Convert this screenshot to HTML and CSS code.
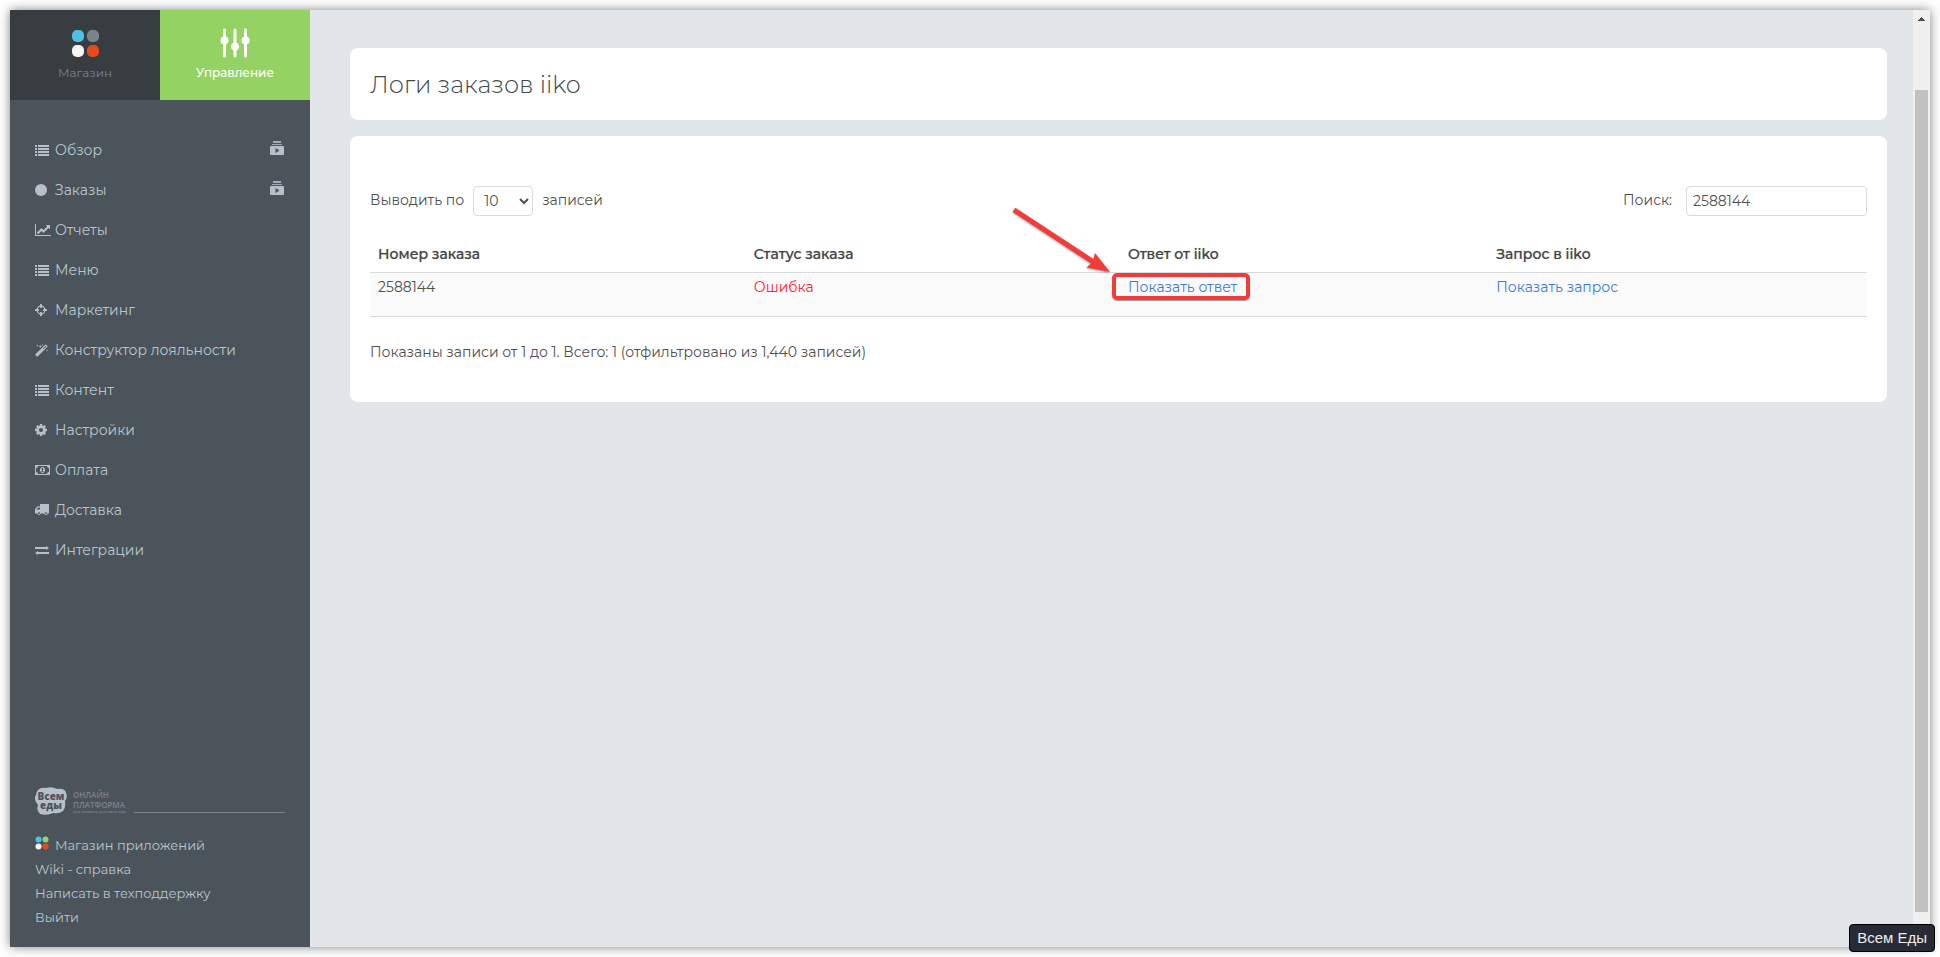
FILE: index.html
```html
<!DOCTYPE html>
<html lang="ru">
<head>
<meta charset="utf-8">
<meta name="viewport" content="width=device-width, initial-scale=1">
<title>Логи заказов iiko</title>
<link rel="stylesheet" href="styles.css">
</head>
<body>
<svg class="sprite" aria-hidden="true">
  <symbol id="i-list" viewBox="0 0 14 11"><path d="M0 0h2v2H0zM3 0h11v2H3zM0 3h2v2H0zM3 3h11v2H3zM0 6h2v2H0zM3 6h11v2H3zM0 9h2v2H0zM3 9h11v2H3z"/></symbol>
  <symbol id="i-circle" viewBox="0 0 12 12"><circle cx="6" cy="6" r="6"/></symbol>
  <symbol id="i-chart" viewBox="0 0 2048 1536"><path d="M2048 1408v128H0V0h128v1408h1920zm-128-1248v435q0 21-19.500 29.500t-35.500-7.500l-121-121-633 633q-10 10-23 10t-23-10l-233-233-416 416-192-192 585-585q10-10 23-10t23 10l233 233 464-464-121-121q-16-16-7.500-35.500t29.500-19.500h435q14 0 23 9t9 23z"/></symbol>
  <symbol id="i-target" viewBox="128 128 1536 1536"><path d="M1325 1024h-109q-26 0-45-19t-19-45v-128q0-26 19-45t45-19h109q-32-108-112.500-188.500t-188.500-112.500v109q0 26-19 45t-45 19h-128q-26 0-45-19t-19-45v-109q-108 32-188.500 112.500t-112.500 188.500h109q26 0 45 19t19 45v128q0 26-19 45t-45 19h-109q32 108 112.500 188.500t188.500 112.500v-109q0-26 19-45t45-19h128q26 0 45 19t19 45v109q108-32 188.500-112.500t112.500-188.500zm339-192v128q0 26-19 45t-45 19h-143q-37 161-154.500 278.500t-278.500 154.500v143q0 26-19 45t-45 19h-128q-26 0-45-19t-19-45v-143q-161-37-278.500-154.500t-154.500-278.500h-143q-26 0-45-19t-19-45v-128q0-26 19-45t45-19h143q37-161 154.500-278.500t278.500-154.500v-143q0-26 19-45t45-19h128q26 0 45 19t19 45v143q161 37 278.500 154.500t154.500 278.500h143q26 0 45 19t19 45z"/></symbol>
  <symbol id="i-magic" viewBox="0 0 13 13"><path fill-rule="evenodd" d="M10.300.7q.4-.4.800 0l1.300 1.300q.4.400 0 .8L2.700 12.600q-.4.400-.8 0L.4 11.100q-.4-.4 0-.8zM10.700 1.900 8.200 4.400l.6.600 2.500-2.500z"/><path d="M2.300.2l.3.900.9.300-.9.300-.3.900-.3-.9-.9-.3.900-.3zM5.200.5l.5 1.300 1.300.5-1.300.5-.5 1.300-.5-1.300-1.300-.5 1.300-.5zM12 5.300l.3.900.7.300-.7.300-.3.900-.3-.9-.8-.3.800-.3zM7.600 0l.3.700.8.300-.8.300-.3.700-.3-.7-.8-.3.800-.3z"/></symbol>
  <symbol id="i-cog" viewBox="128 128 1536 1536"><path d="M1152 896q0-106-75-181t-181-75-181 75-75 181 75 181 181 75 181-75 75-181zm512-109v222q0 12-8 23t-20 13l-185 28q-19 54-39 91 35 50 107 138 10 12 10 25t-9 23q-27 37-99 108t-94 71q-12 0-26-9l-138-108q-44 23-91 38-16 136-29 186-7 28-36 28h-222q-14 0-24.500-8.500t-11.500-21.500l-28-184q-49-16-90-37l-141 107q-10 9-25 9-14 0-25-11-126-114-165-168-7-10-7-23 0-12 8-23 15-21 51-66.500t54-70.500q-27-50-41-99l-183-27q-13-2-21-12.500t-8-23.500v-222q0-12 8-23t19-13l186-28q14-46 39-92-40-57-107-138-10-12-10-24 0-10 9-23 26-36 98.500-107.500t94.500-71.500q13 0 26 10l138 107q44-23 91-38 16-136 29-186 7-28 36-28h222q14 0 24.500 8.500t11.500 21.500l28 184q49 16 90 37l142-107q9-9 24-9 13 0 25 10 129 119 165 170 7 8 7 22 0 12-8 23-15 21-51 66.500t-54 70.500q26 50 41 98l183 28q13 2 21 12.500t8 23.500z"/></symbol>
  <symbol id="i-money" viewBox="0 0 15 10"><path fill-rule="evenodd" d="M.5 0h14q.5 0 .5.500v9q0 .5-.5.500H.5Q0 10 0 9.500v-9Q0 0 .500 0zM3 1Q3 3 1 3v4q2 0 2 2h9q0-2 2-2V3q-2 0-2-2zM7.500 2C9 2 10 3.400 10 5s-1 3-2.500 3S5 6.600 5 5s1-3 2.500-3zM7 3 6.100 3.800l.4.500.5-.3v2h-.8v.8h2.600V6H8V3z"/></symbol>
  <symbol id="i-truck" viewBox="0 0 14 12"><path fill-rule="evenodd" d="M5.500 0H13.500q.5 0 .5.500V9q0 .5-.8.500h-.4a1.900 1.900 0 0 1-3.700 0H5.900a1.900 1.900 0 0 1-3.700 0H.7Q0 9.500 0 9V5.800Q0 5 .5 4.500L2.300 2.600Q2.700 2.200 3.300 2.200H5V.5Q5 0 5.500 0zM1.200 5.500H5v-2H3.300zM4.050 8.200a.9.900 0 1 0 .01 0zM10.950 8.200a.9.900 0 1 0 .01 0z"/></symbol>
  <symbol id="i-exchange" viewBox="0 0 14 9"><path d="M0 1h11V0l3 2-3 2V3H0zM14 6H3V5L0 7l3 2V8h11z"/></symbol>
  <symbol id="i-video" viewBox="0 0 14 14"><path d="M3 0h8v2H3zM2 3h10v1H2z" opacity=".8"/><path fill-rule="evenodd" d="M1 5h12q1 0 1 1v7q0 1-1 1H1q-1 0-1-1V6q0-1 1-1zM5.500 7v5l4-2.500z"/></symbol>
</svg>

<div class="window">
  <aside class="sidebar">
    <div class="tabs">
      <a class="tab" href="#">
        <svg class="tab-icon" viewBox="0 0 27 27"><rect width="12" height="12" rx="5" fill="#4fbfe5"/><rect x="15" width="12" height="12" rx="5" fill="#7b838b"/><rect y="15" width="12" height="12" rx="5" fill="#f5f5f5"/><rect x="15" y="15" width="12" height="12" rx="5" fill="#e8491f"/></svg>
        <span>Магазин</span>
      </a>
      <a class="tab tab-active" href="#">
        <svg class="tab-icon tab-icon-wide" viewBox="0 0 30 30"><path d="M4.500 2v26M15 2v26M25.500 2v26" stroke="#fff" stroke-width="3" stroke-linecap="round"/><g fill="#fff"><circle cx="4.500" cy="12.500" r="4"/><circle cx="15" cy="18.500" r="4"/><circle cx="25.500" cy="12.500" r="4"/></g></svg>
        <span>Управление</span>
      </a>
    </div>

    <nav class="menu">
      <a href="#"><svg class="ic" width="14" height="11"><use href="#i-list"/></svg><span>Обзор</span><svg class="video" width="14" height="14"><use href="#i-video"/></svg></a>
      <a href="#"><svg class="ic" width="12" height="12"><use href="#i-circle"/></svg><span>Заказы</span><svg class="video" width="14" height="14"><use href="#i-video"/></svg></a>
      <a href="#"><svg class="ic" width="16" height="12"><use href="#i-chart"/></svg><span>Отчеты</span></a>
      <a href="#"><svg class="ic" width="14" height="11"><use href="#i-list"/></svg><span>Меню</span></a>
      <a href="#"><svg class="ic" width="12" height="12"><use href="#i-target"/></svg><span>Маркетинг</span></a>
      <a href="#"><svg class="ic" width="13" height="13"><use href="#i-magic"/></svg><span>Конструктор лояльности</span></a>
      <a href="#"><svg class="ic" width="14" height="11"><use href="#i-list"/></svg><span>Контент</span></a>
      <a href="#"><svg class="ic" width="12" height="12"><use href="#i-cog"/></svg><span>Настройки</span></a>
      <a href="#"><svg class="ic" width="15" height="10"><use href="#i-money"/></svg><span>Оплата</span></a>
      <a href="#"><svg class="ic" width="14" height="12"><use href="#i-truck"/></svg><span>Доставка</span></a>
      <a href="#"><svg class="ic" width="14" height="9"><use href="#i-exchange"/></svg><span>Интеграции</span></a>
    </nav>

    <footer class="side-foot">
      <div class="brand">
        <svg class="brand-logo" viewBox="0 0 32 28"><path d="M3 3Q6 0 11 1Q17-1 22 2Q30 1 31 6Q33 10 30 14Q31 21 28 24Q24 27 18 26Q12 29 5 27Q1 23 3 18Q-2 12 1 8Q1 5 3 3z" fill="#b7c0c9"/><text x="16" y="13" class="logo-text">Всем</text><text x="16" y="22" class="logo-text">еды</text></svg>
        <div class="brand-text"><span>ОНЛАЙН</span><span>ПЛАТФОРМА</span><small>для бизнеса доставки еды</small></div>
        <div class="brand-line"></div>
      </div>
      <a href="#"><svg class="dots" viewBox="0 0 14 14"><circle cx="3.500" cy="3.500" r="3" fill="#4fbfe5"/><circle cx="10.500" cy="3.500" r="3" fill="#93d363"/><circle cx="3.500" cy="10.500" r="3" fill="#f5f5f5"/><circle cx="10.500" cy="10.500" r="3" fill="#e8491f"/></svg>Магазин приложений</a>
      <a href="#">Wiki - справка</a>
      <a href="#">Написать в техподдержку</a>
      <a href="#">Выйти</a>
    </footer>
  </aside>

  <main class="content">
    <section class="card title-card"><h1>Логи заказов iiko</h1></section>
    <section class="card table-card">
      <div class="controls">
        <div class="control">
          <label for="len">Выводить по</label>
          <select id="len"><option>10</option><option>25</option><option>50</option></select>
          <span>записей</span>
        </div>
        <div class="control control-search">
          <label for="search">Поиск:</label>
          <input id="search" type="text" value="2588144">
        </div>
      </div>
      <table class="orders">
        <colgroup><col class="c-num"><col class="c-status"><col class="c-answer"><col></colgroup>
        <thead><tr><th>Номер заказа</th><th>Статус заказа</th><th>Ответ от iiko</th><th>Запрос в iiko</th></tr></thead>
        <tbody><tr>
          <td>2588144</td>
          <td class="error">Ошибка</td>
          <td><span class="marked"><a href="#">Показать ответ</a>
            <svg class="arrow" viewBox="0 0 100 66"><path d="M3.300.7 81.500 52 83 46 98 65 74.500 60.500 79 56.500.7 5z"/></svg></span></td>
          <td><a href="#">Показать запрос</a></td>
        </tr></tbody>
      </table>
      <p class="info">Показаны записи от 1 до 1. Всего: 1 (отфильтровано из 1,440 записей)</p>
    </section>
  </main>

  <div class="scrollbar">
    <svg class="scroll-up" viewBox="0 0 7 4"><path d="M3 0h1v1h1v1h1v1h1v1H0V3h1V2h1V1h1z"/></svg>
    <div class="thumb"></div>
  </div>
</div>
<div class="badge">Всем Еды</div>
</body>
</html>
```

FILE: styles.css
```css
* { box-sizing: border-box; }
body {
  margin: 0;
  padding: 10px;
  min-height: 100vh;
  display: flex;
  background: #fff;
  color: #4f4f4f;
  font: 14px/20px Montserrat, Inter, "Noto Sans", sans-serif;
}
a { color: #3a7bdc; text-decoration: none; }
.sprite { position: absolute; width: 0; height: 0; }

.window {
  flex: 1;
  display: flex;
  background: #e2e6e9;
  box-shadow: 0 0 10px rgba(0, 0, 0, .5);
}

/* Sidebar */
.sidebar {
  flex: none;
  width: 300px;
  display: flex;
  flex-direction: column;
  background: #4c545b;
}
.tabs { display: flex; height: 90px; }
.tab {
  flex: 1;
  display: flex;
  flex-direction: column;
  align-items: center;
  gap: 5px;
  padding-top: 18px;
  background: #383d41;
  color: #7b838b;
  font-size: 12px;
}
.tab-icon { width: 30px; height: 30px; padding: 2px 1px 1px 2px; }
.tab-icon-wide { padding: 0; }
.tab-active { background: #94d363; color: #fff; font-weight: 500; }

.menu { flex: 1; padding: 30px 25px; }
.menu a {
  height: 40px;
  display: grid;
  grid-template-columns: 20px 1fr 15px;
  align-items: center;
  color: #b7c7cd;
}
.ic { fill: #b7c0c9; }
.video { fill: #b7c0c9; margin-bottom: 4px; }

.side-foot { padding: 0 25px 18px; display: flex; flex-direction: column; }
.side-foot a { color: #b7c7cd; font-size: 13px; line-height: 24px; }
.brand { display: flex; margin-bottom: 18px; }
.brand-logo { width: 32px; height: 28px; }
.logo-text { font: 800 10px "Open Sans", sans-serif; fill: #4c545b; text-anchor: middle; }
.brand-text {
  display: flex;
  flex-direction: column;
  width: 53px;
  margin: 3px 8px 0 6px;
  color: #7b838b;
  font: 600 8px/10px "Open Sans", sans-serif;
  white-space: nowrap;
}
.brand-text small { font-size: 4px; line-height: 4px; }
.brand-line { flex: 1; height: 26px; border-bottom: 1px solid #7b838b; }
.dots { width: 14px; height: 14px; margin-right: 6px; }

/* Content */
.content {
  flex: 1;
  padding: 38px 26px 38px 40px;
  display: flex;
  flex-direction: column;
  gap: 16px;
}
.card { background: #fff; border-radius: 8px; padding: 20px; }
.title-card { padding: 21px 20px 19px; }
h1 {
  margin: 0;
  color: #41484e;
  font-size: 24px;
  font-weight: 300;
  line-height: 32px;
}
.table-card { padding: 50px 20px 40px; }
.controls { display: flex; justify-content: space-between; }
.control { display: flex; align-items: center; gap: 9px; }
.control label, .control span { padding-bottom: 2px; }
.control-search { gap: 14px; }
select, input {
  height: 30px;
  border: 1px solid #d9dbdc;
  border-radius: 4px;
  background: #fff;
  color: #4f4f4f;
  font: inherit;
}
select { width: 60px; padding: 0 0 0 6px; }
input { width: 181px; padding: 0 6px; }

.orders {
  width: 100%;
  margin-top: 20px;
  border-collapse: collapse;
  table-layout: fixed;
  border-bottom: 1px solid #d9dbdc;
}
.c-num { width: 25.1%; }
.c-status { width: 25%; }
.c-answer { width: 24.6%; }
.orders th {
  padding: 8px;
  text-align: left;
  font-weight: 500;
  color: #444;
  text-shadow: 0 0 1px rgba(68, 68, 68, .6);
}
.orders td {
  height: 44px;
  padding: 4px 8px;
  vertical-align: top;
  background: #fafafa;
  border-top: 1px solid #d9dbdc;
}
.orders .error { color: #ff2338; }
.info { margin: 25px 0 0; }

/* Callout around the answer link */
.marked { position: relative; }
.marked::before {
  content: "";
  position: absolute;
  inset: -5px -13px -4px -16px;
  border: 4px solid #f23b3b;
  border-radius: 5px;
  box-shadow: 0 1px 1px rgba(0, 0, 0, .4);
  pointer-events: none;
}
.arrow {
  position: absolute;
  right: 100%;
  bottom: 100%;
  width: 100px;
  height: 66px;
  margin: 0 16px 5px 0;
  fill: #f23b3b;
  filter: drop-shadow(0 1px 1px rgba(0, 0, 0, .4));
}

/* Scrollbar */
.scrollbar {
  flex: none;
  width: 17px;
  display: flex;
  flex-direction: column;
  align-items: center;
  padding: 7px 2px 35px;
  background: #f0f0f0;
}
.scroll-up { width: 7px; height: 4px; fill: #505050; }
.thumb { flex: 1; width: 13px; margin-top: 69px; background: #c1c1c1; }

.badge {
  position: fixed;
  right: 5px;
  bottom: 5px;
  padding: 3px 7px;
  border: 1px solid #000;
  border-radius: 4px;
  background: #262b35;
  color: #eee;
  font: 15px/20px "Liberation Sans", sans-serif;
}
```
